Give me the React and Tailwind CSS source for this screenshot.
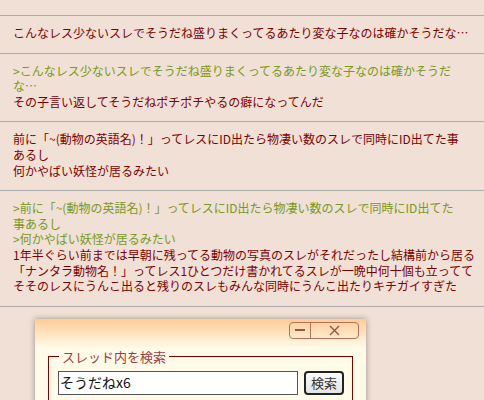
import React from 'react'

const red = 'text-[#800000]'
const green = 'text-[#789922]'

const Post = ({ lines }) => (
  <div className="border-b border-[#aaaaaa] pl-[13px] pt-[9px] pb-[12px]">
    {lines.map((l, i) => (
      <div key={i} className={`whitespace-nowrap ${l.q ? green : red}`}>
        {l.t}
      </div>
    ))}
  </div>
)

const posts = [
  [{ t: 'こんなレス少ないスレでそうだね盛りまくってるあたり変な子なのは確かそうだな…' }],
  [
    { q: true, t: '>こんなレス少ないスレでそうだね盛りまくってるあたり変な子なのは確かそうだ' },
    { q: true, t: 'な…' },
    { t: 'その子言い返してそうだねポチポチやるの癖になってんだ' },
  ],
  [
    { t: '前に「~(動物の英語名)！」ってレスにID出たら物凄い数のスレで同時にID出てた事' },
    { t: 'あるし' },
    { t: '何かやばい妖怪が居るみたい' },
  ],
  [
    { q: true, t: '>前に「~(動物の英語名)！」ってレスにID出たら物凄い数のスレで同時にID出てた' },
    { q: true, t: '事あるし' },
    { q: true, t: '>何かやばい妖怪が居るみたい' },
    { t: '1年半ぐらい前までは早朝に残ってる動物の写真のスレがそれだったし結構前から居る' },
    { t: '「ナンタラ動物名！」ってレス1ひとつだけ書かれてるスレが一晩中何十個も立ってて' },
    { t: 'そそのレスにうんこ出ると残りのスレもみんな同時にうんこ出たりキチガイすぎた' },
  ],
]

export default function App() {
  return (
    <div
      className="h-[400px] w-[484px] overflow-hidden bg-[#f0e0d6] text-[12px] leading-[15.6px]"
      style={{ fontFamily: '"Noto Sans CJK JP", "Noto Sans", sans-serif' }}
    >
      <div className="h-4 border-b border-[#aaaaaa]" />
      {posts.map((p, i) => (
        <Post key={i} lines={p} />
      ))}

      <div className="ml-[35px] mt-[12px] w-[331px] bg-[#fffbe8] shadow-[0_0_6px_rgba(0,0,0,0.35)]">
        <div className="flex h-[29px] justify-end bg-gradient-to-b from-[#ffcc95] to-[#fffbe8] pr-[7px] pt-[3px]">
          <div className="flex h-[17px] overflow-hidden rounded-[4px] border border-[#b8705e]">
            <div className="flex w-[21px] items-center justify-center border-r border-[#b8705e]">
              <div className="h-[2px] w-[10px] bg-[#a0504a]" />
            </div>
            <div className="flex w-[47px] items-center justify-center">
              <svg width="11" height="11" viewBox="0 0 11 11">
                <path d="M1 1L10 10M10 1L1 10" stroke="#a0504a" strokeWidth="1.4" />
              </svg>
            </div>
          </div>
        </div>
        <fieldset className="mx-[13px] border border-[#800000] pb-3 pl-[9px] pr-2">
          <legend className="ml-[1px] px-[3px] text-[13px] leading-[18px] text-[#a33c3c]">スレッド内を検索</legend>
          <div className="flex items-center gap-[6px] pt-[5px]">
            <div className="flex h-[24px] w-[240px] items-center border border-[#555] bg-white pl-[1px] text-[14px] text-[#111]">
              そうだねx6
            </div>
            <div className="flex h-[24px] w-[40px] items-center justify-center rounded-[4px] border-2 border-[#222] bg-gradient-to-b from-[#fafafa] to-[#e4e4e4] text-[13px] text-[#333]">
              検索
            </div>
          </div>
        </fieldset>
      </div>
    </div>
  )
}
